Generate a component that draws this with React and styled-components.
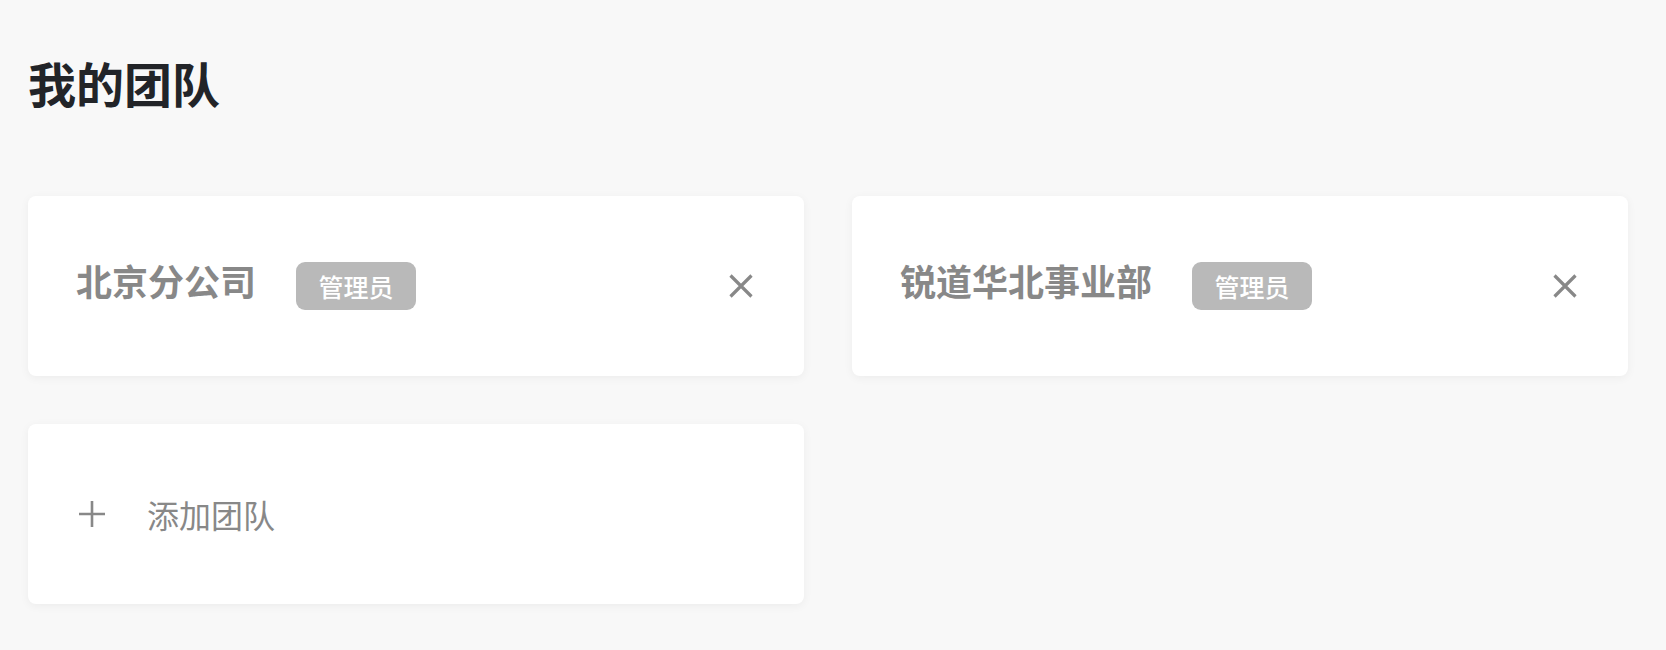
import React from 'react'
import styled, { createGlobalStyle } from 'styled-components'

const GlobalStyle = createGlobalStyle`
  html, body {
    margin: 0;
    padding: 0;
    background: #f8f8f8;
    font-family: "Noto Sans CJK SC", "Noto Sans", sans-serif;
  }
`

const Page = styled.div`
  padding: 50px 28px 40px;
`

const Title = styled.h1`
  margin: 0 0 82px 0;
  font-size: 48px;
  line-height: 64px;
  font-weight: 700;
  color: #222428;
`

const Grid = styled.div`
  display: grid;
  grid-template-columns: repeat(2, 776px);
  column-gap: 48px;
  row-gap: 48px;
`

const Card = styled.div`
  height: 180px;
  box-sizing: border-box;
  background: #fff;
  border-radius: 8px;
  box-shadow: 0 2px 10px rgba(0, 0, 0, 0.05);
  display: flex;
  align-items: center;
  padding: 0 50px 0 48px;
  cursor: ${({ clickable }) => (clickable ? 'pointer' : 'default')};
`

const Name = styled.span`
  font-size: 36px;
  font-weight: 700;
  color: #888;
  margin-top: -12px;
  margin-right: 40px;
  white-space: nowrap;
`

const Badge = styled.span`
  display: inline-flex;
  align-items: center;
  justify-content: center;
  width: 120px;
  height: 48px;
  border-radius: 9px;
  background: #b9b9b9;
  color: #fff;
  font-size: 25px;
  font-weight: 500;
`

const Close = styled.button`
  margin-left: auto;
  border: 0;
  background: none;
  padding: 0;
  width: 26px;
  height: 26px;
  display: flex;
  align-items: center;
  justify-content: center;
  cursor: pointer;
`

const AddLabel = styled.span`
  font-size: 32px;
  color: #888;
  margin-left: 42px;
`

const PlusIcon = styled.svg`
  margin-left: 3px;
  flex-shrink: 0;
`

const teams = [
  { id: 1, name: '北京分公司', role: '管理员' },
  { id: 2, name: '锐道华北事业部', role: '管理员' }
]

const CloseIcon = () => (
  <svg width="24" height="24" viewBox="0 0 24 24">
    <path d="M1.5 1.5 L22.5 22.5 M22.5 1.5 L1.5 22.5" stroke="#888" strokeWidth="3.2" />
  </svg>
)

export default function App() {
  return (
    <Page>
      <GlobalStyle />
      <Title>我的团队</Title>
      <Grid>
        {teams.map(team => (
          <Card key={team.id}>
            <Name>{team.name}</Name>
            <Badge>{team.role}</Badge>
            <Close aria-label="close">
              <CloseIcon />
            </Close>
          </Card>
        ))}
        <Card clickable>
          <PlusIcon width="26" height="26" viewBox="0 0 26 26">
            <path d="M13 0 V26 M0 13 H26" stroke="#888" strokeWidth="2.6" />
          </PlusIcon>
          <AddLabel>添加团队</AddLabel>
        </Card>
      </Grid>
    </Page>
  )
}
